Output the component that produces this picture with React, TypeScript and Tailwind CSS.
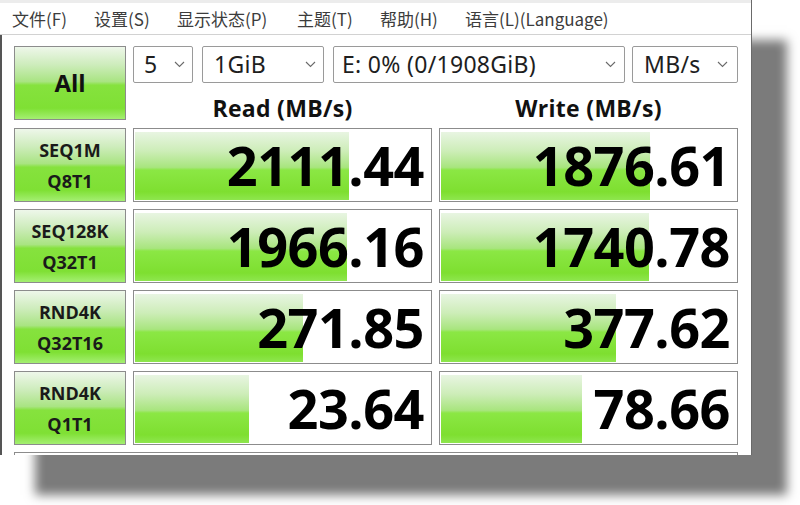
import { ReactNode } from 'react'

const menus = [
  { t: '文件(F)', w: 'w-[82px]' },
  { t: '设置(S)', w: 'w-[83px]' },
  { t: '显示状态(P)', w: 'w-[120px]' },
  { t: '主题(T)', w: 'w-[83px]' },
  { t: '帮助(H)', w: 'w-[85px]' },
  { t: '语言(L)(Language)', w: 'w-auto' },
]

const rows = [
  { a: 'SEQ1M', b: 'Q8T1', read: '2111.44', readPct: 72, write: '1876.61', writePct: 70.5 },
  { a: 'SEQ128K', b: 'Q32T1', read: '1966.16', readPct: 71.5, write: '1740.78', writePct: 70 },
  { a: 'RND4K', b: 'Q32T16', read: '271.85', readPct: 56.5, write: '377.62', writePct: 59 },
  { a: 'RND4K', b: 'Q1T1', read: '23.64', readPct: 38.5, write: '78.66', writePct: 47.5 },
]

const greenBtn =
  'border border-[#8c8c8c] bg-[linear-gradient(to_bottom,#eef7ea_0%,#cdecbb_25%,#a9e482_48%,#86e23e_53%,#7fe034_85%,#a4ef72_100%)]'

function Chevron() {
  return (
    <svg width="11" height="7" viewBox="0 0 11 7" className="shrink-0">
      <path d="M1 1l4.5 4.5L10 1" fill="none" stroke="#6a6a6a" strokeWidth="1.1" />
    </svg>
  )
}

function Select({ w, pl, pr, children }: { w: string; pl: string; pr: string; children: ReactNode }) {
  return (
    <div className={`${w} ${pl} ${pr} h-[37px] flex items-center justify-between border border-[#9a9a9a] rounded-[2px] bg-white text-[23px] tracking-[0.3px] text-[#1e1e1e] font-['Noto_Sans',sans-serif]`}>
      <span className="leading-none pb-[1px]">{children}</span>
      <Chevron />
    </div>
  )
}

function Value({ value, pct }: { value: string; pct: number }) {
  return (
    <div className="relative w-[299px] h-[74px] border border-[#8c8c8c] bg-white flex items-center justify-end pr-[7px]">
      <div
        className="absolute left-[1px] top-[3px] bottom-[1px] bg-[linear-gradient(to_bottom,#e8f5e2_0%,#cdedb8_28%,#a8e57e_52%,#8be744_56%,#7edf30_88%,#8ee64e_100%)]"
        style={{ width: `${pct}%` }}
      />
      <span className="relative text-[54px] font-bold leading-none text-black tracking-[-0.5px] font-['Open_Sans',sans-serif]">
        {value}
      </span>
    </div>
  )
}

export default function App() {
  return (
    <div className="w-[800px] h-[505px] bg-white overflow-hidden">
      <div className="w-[752px] h-[455px] bg-white shadow-[35px_40px_10px_#7b7b7b] border-r border-[#6a6a6a] flex flex-col overflow-hidden">
        <div className="h-[3px] shrink-0 bg-[#ececec]" />
        <div className="h-[32px] shrink-0 flex items-center pl-[12px] border-b border-[#d2d2d2] text-[17px] text-[#3c3c3c] font-['Noto_Sans_CJK_SC',sans-serif]">
          {menus.map((m) => (
            <span key={m.t} className={`${m.w} shrink-0 leading-none`}>
              {m.t}
            </span>
          ))}
        </div>

        <div className="flex-1 min-h-0 border-l-2 border-[#555] pl-[12px] pt-[11px] bg-white">
          <div className="flex gap-[7px] h-[74px]">
            <div className={`w-[112px] h-[74px] flex items-center justify-center ${greenBtn}`}>
              <span className="text-[24px] font-bold text-[#111] font-['Open_Sans',sans-serif]">All</span>
            </div>
            <div className="w-[605px] flex flex-col">
              <div className="flex h-[37px] shrink-0">
                <Select w="w-[60px]" pl="pl-[10px]" pr="pr-[7px]">5</Select>
                <div className="w-[9px]" />
                <Select w="w-[122px]" pl="pl-[11px]" pr="pr-[7px]">1GiB</Select>
                <div className="w-[9px]" />
                <Select w="w-[292px]" pl="pl-[8px]" pr="pr-[8px]">E: 0% (0/1908GiB)</Select>
                <div className="w-[7px]" />
                <Select w="w-[106px]" pl="pl-[11px]" pr="pr-[9px]">MB/s</Select>
              </div>
              <div className="flex-1 flex gap-[7px] items-end text-[23px] leading-none tracking-[0.3px] font-bold text-[#111] font-['Open_Sans',sans-serif]">
                <div className="w-[299px] text-center">Read (MB/s)</div>
                <div className="w-[299px] text-center">Write (MB/s)</div>
              </div>
            </div>
          </div>

          <div className="mt-[8px] flex flex-col gap-[7px]">
            {rows.map((r, i) => (
              <div key={i} className="flex gap-[7px] h-[74px] shrink-0">
                <div className={`w-[112px] h-[74px] flex flex-col items-center justify-center gap-[13px] text-[18px] font-bold leading-none text-[#1a1a1a] font-['Open_Sans',sans-serif] ${greenBtn}`}>
                  <span>{r.a}</span>
                  <span>{r.b}</span>
                </div>
                <Value value={r.read} pct={r.readPct} />
                <Value value={r.write} pct={r.writePct} />
              </div>
            ))}
            <div className="w-[724px] h-[40px] shrink-0 border border-[#8c8c8c] bg-white" />
          </div>
        </div>
      </div>
    </div>
  )
}
